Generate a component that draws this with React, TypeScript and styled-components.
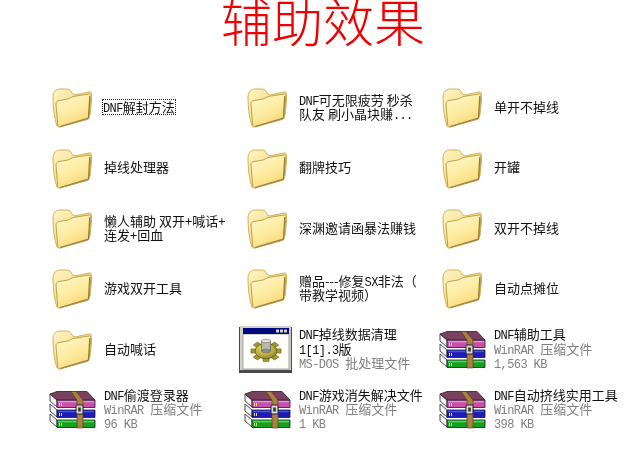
import React from 'react';
import styled, { createGlobalStyle } from 'styled-components';

const GlobalStyle = createGlobalStyle`
  html, body {
    margin: 0;
    padding: 0;
    background: #fff;
  }
`;

const Page = styled.div`
  width: 641px;
  height: 450px;
  overflow: hidden;
  font-family: 'Noto Sans CJK SC', 'Liberation Sans', sans-serif;
`;

const Title = styled.h1`
  margin: 0;
  height: 78px;
  padding-left: 5px;
  font-size: 51px;
  line-height: 40px;
  font-weight: 300;
  text-align: center;
  color: #f00000;
`;

const Grid = styled.div`
  display: grid;
  grid-template-columns: repeat(3, 195px);
  grid-auto-rows: 60.4px;
  padding-left: 44px;
`;

const Item = styled.div`
  display: flex;
  align-items: center;
`;

const Slot = styled.div<{ $inset: number }>`
  flex: none;
  width: 60px;
  padding-left: ${(p) => p.$inset}px;
  box-sizing: border-box;
  display: flex;
  filter: blur(0.35px);
`;

const Label = styled.div<{ $focused?: boolean }>`
  margin-left: ${(p) => (p.$focused ? '-1px' : '0')};
  margin-top: -2px;
  outline: ${(p) => (p.$focused ? '1px dotted #222' : 'none')};
  font-size: 13px;
  line-height: 14.4px;
  color: #111;
  white-space: nowrap;
  filter: blur(0.25px);
`;

const Line = styled.div<{ $muted?: boolean }>`
  color: ${(p) => (p.$muted ? '#808080' : 'inherit')};
`;

const Latin = styled.span`
  font-family: 'Liberation Mono', monospace;
  font-size: 12px;
  line-height: 0;
  letter-spacing: -0.6px;
`;

const FolderIcon = () => (
  <svg width="40" height="40" viewBox="0 0 40 40">
    <defs>
      <linearGradient id="fBack" x1="0" y1="0" x2="1" y2="1">
        <stop offset="0" stopColor="#fff6c4" />
        <stop offset="1" stopColor="#e8c868" />
      </linearGradient>
      <linearGradient id="fFront" x1="0.1" y1="0" x2="0.6" y2="1">
        <stop offset="0" stopColor="#fff8cc" />
        <stop offset="0.6" stopColor="#fdea9c" />
        <stop offset="1" stopColor="#f6d578" />
      </linearGradient>
    </defs>
    <path
      d="M1 9 C1 4 4 1 8 1 L15 1 C18 1 19 3 20 5 C21 7 23 7 25 6.500 L37 4 C39 3.600 40 5 40 7 L38 27 L5 38 C2 30 1 18 1 9 Z"
      fill="url(#fBack)"
      stroke="#d2b25c"
    />
    <path
      d="M4 16 C4 14 5 13 7 12.500 L16 11 C18 10.600 19 9 21 8.500 L37 6 C38.500 5.800 39 6.500 39 8 L37 29 C37 30.500 36.500 31 35 31.500 L8 39 C6.500 39.400 6 39 5.800 37.500 Z"
      fill="url(#fFront)"
      stroke="#c0a04a"
    />
    <path d="M37.800 8 L36.500 30 L8 38.500" fill="none" stroke="#9a7f38" strokeWidth="1.300" />
  </svg>
);

const Book = ({ y, cover, edge }: { y: number; cover: string; edge: string }) => (
  <g transform={`translate(0 ${y})`}>
    <path d="M1 3 L8 9 L8 16 L1 10 Z" fill="#f4f4f4" stroke="#222" strokeWidth="0.800" />
    <path d="M8 9 L46 9 L46 16.500 L8 16.500 Z" fill={cover} stroke="#1c1c30" strokeWidth="0.800" />
    <path d="M9 10.500 L45 10.500" stroke={edge} strokeWidth="1.400" />
    <path d="M10.500 12 L10.500 15 M12.500 12 L12.500 15" stroke="#e8e070" strokeWidth="1" />
  </g>
);

const RarIcon = () => (
  <svg width="47" height="38" viewBox="0 0 47 38">
    <Book y={20} cover="#16a01e" edge="#58d860" />
    <Book y={10} cover="#1e1cb4" edge="#5050e4" />
    <Book y={0} cover="#c850a8" edge="#e898d0" />
    <path d="M1 3 L8 0.500 L38 0.500 L46 9 L8 9 Z" fill="#7a4060" stroke="#2a1a28" strokeWidth="0.800" />
    <path d="M22 0.500 L27 0.500 L34 9 L34 37 L28 37 L28 9 Z" fill="#a8803f" stroke="#4a3820" strokeWidth="0.600" />
    <rect x="27" y="14" width="7" height="9" rx="1" fill="#d8d8d8" stroke="#222" strokeWidth="1" />
    <rect x="29.200" y="16.500" width="2.600" height="4" fill="#333" />
  </svg>
);

const gearTeeth = [0, 45, 90, 135, 180, 225, 270, 315];

const BatchIcon = () => (
  <svg width="53" height="47" viewBox="0 0 53 47">
    <defs>
      <radialGradient id="gearFill" cx="0.4" cy="0.35" r="0.8">
        <stop offset="0" stopColor="#efe46a" />
        <stop offset="1" stopColor="#85791a" />
      </radialGradient>
    </defs>
    <rect x="0" y="1" width="53" height="46" fill="#4a4a4a" />
    <rect x="1" y="0" width="51" height="44" fill="#d4d0c8" />
    <rect x="4" y="8" width="46" height="35" fill="#fff" stroke="#909090" strokeWidth="0.800" />
    <rect x="4" y="2" width="46" height="6" fill="#000a80" />
    <rect x="37" y="3.500" width="3" height="3" fill="#d4d0c8" />
    <rect x="41" y="3.500" width="3" height="3" fill="#d4d0c8" />
    <rect x="45" y="3.500" width="3" height="3" fill="#d4d0c8" />
    <g transform="translate(27 25) scale(1 0.7)">
      {gearTeeth.map((deg) => (
        <rect key={deg} x="-3" y="-15" width="6" height="5" fill="#a39a28" stroke="#5a5412" strokeWidth="0.600" transform={`rotate(${deg})`} />
      ))}
      <circle r="11" fill="url(#gearFill)" stroke="#5a5412" strokeWidth="0.800" />
    </g>
    <rect x="22.500" y="15" width="9" height="10" fill="#b8b8b0" stroke="#6a6a62" strokeWidth="0.800" />
    <ellipse cx="27" cy="25" rx="4.500" ry="1.800" fill="#8f8f86" stroke="#6a6a62" strokeWidth="0.600" />
    <ellipse cx="27" cy="15" rx="4.500" ry="1.800" fill="#e4e4dc" stroke="#6a6a62" strokeWidth="0.600" />
  </svg>
);

type Entry = {
  kind: 'folder' | 'rar' | 'bat';
  lines: React.ReactNode[];
  muted?: React.ReactNode[];
  focused?: boolean;
};

const DNF = <Latin>DNF</Latin>;
const Rar = <><Latin>WinRAR </Latin>压缩文件</>;

const entries: Entry[] = [
  { kind: 'folder', lines: [<>{DNF}解封方法</>], focused: true },
  { kind: 'folder', lines: [<>{DNF}可无限疲劳 秒杀</>, <>队友 刷小晶块赚<Latin>...</Latin></>] },
  { kind: 'folder', lines: ['单开不掉线'] },
  { kind: 'folder', lines: ['掉线处理器'] },
  { kind: 'folder', lines: ['翻牌技巧'] },
  { kind: 'folder', lines: ['开罐'] },
  { kind: 'folder', lines: ['懒人辅助 双开+喊话+', '连发+回血'] },
  { kind: 'folder', lines: ['深渊邀请函暴法赚钱'] },
  { kind: 'folder', lines: ['双开不掉线'] },
  { kind: 'folder', lines: ['游戏双开工具'] },
  { kind: 'folder', lines: [<>赠品---修复<Latin>SX</Latin>非法（</>, '带教学视频）'] },
  { kind: 'folder', lines: ['自动点摊位'] },
  { kind: 'folder', lines: ['自动喊话'] },
  {
    kind: 'bat',
    lines: [<>{DNF}掉线数据清理</>, <><Latin>1[1].3</Latin>版</>],
    muted: [<><Latin>MS-DOS </Latin>批处理文件</>],
  },
  { kind: 'rar', lines: [<>{DNF}辅助工具</>], muted: [Rar, <Latin>1,563 KB</Latin>] },
  { kind: 'rar', lines: [<>{DNF}偷渡登录器</>], muted: [Rar, <Latin>96 KB</Latin>] },
  { kind: 'rar', lines: [<>{DNF}游戏消失解决文件</>], muted: [Rar, <Latin>1 KB</Latin>] },
  { kind: 'rar', lines: [<>{DNF}自动挤线实用工具</>], muted: [Rar, <Latin>398 KB</Latin>] },
];

const insets = { folder: 8, rar: 5, bat: -3 };

const App = () => (
  <Page>
    <GlobalStyle />
    <Title>辅助效果</Title>
    <Grid>
      {entries.map((entry, i) => (
        <Item key={i}>
          <Slot $inset={insets[entry.kind]}>
            {entry.kind === 'folder' && <FolderIcon />}
            {entry.kind === 'rar' && <RarIcon />}
            {entry.kind === 'bat' && <BatchIcon />}
          </Slot>
          <Label $focused={entry.focused}>
            {entry.lines.map((line, j) => (
              <Line key={j}>{line}</Line>
            ))}
            {entry.muted?.map((line, j) => (
              <Line key={j} $muted>{line}</Line>
            ))}
          </Label>
        </Item>
      ))}
    </Grid>
  </Page>
);

export default App;
